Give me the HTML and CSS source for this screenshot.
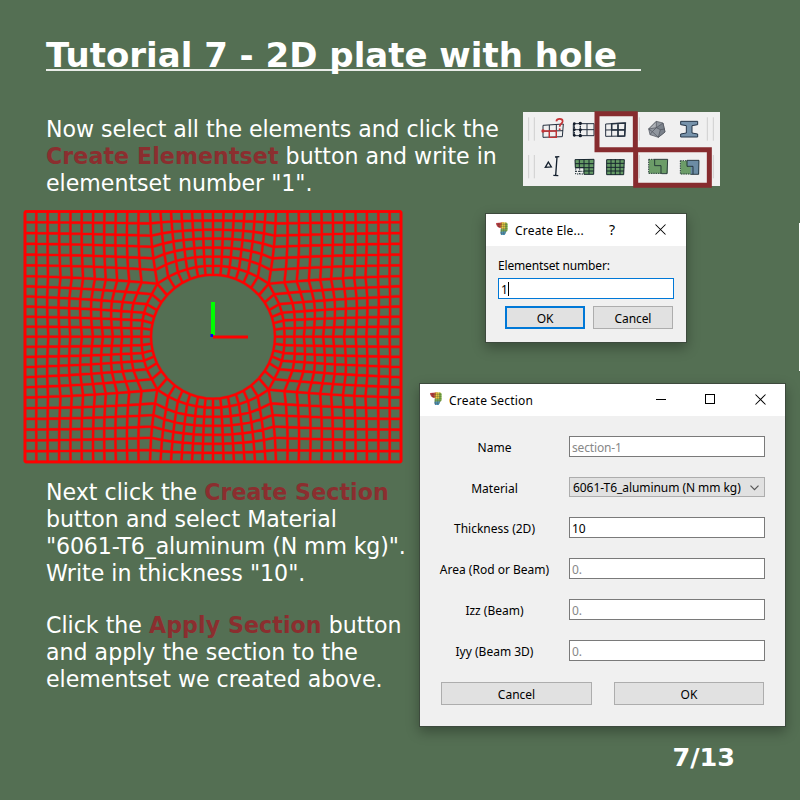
FILE: index.html
```html
<!DOCTYPE html>
<html lang="en">
<head>
<meta charset="utf-8">
<title>Tutorial 7 - 2D plate with hole</title>
<link rel="stylesheet" href="styles.css">
</head>
<body>
<svg width="0" height="0" class="defs">
  <symbol id="logo" viewBox="0 0 14 15">
    <path d="M0 1 7 .5 7 5.500 4 6.500 1 4.500Z" fill="#c03c42"/>
    <path d="M5 .8 8 .3 8 5.500 4.500 6.500Z" fill="#d9822b"/>
    <path d="M7 .3 11.500.5 12 8 5.500 8 6 4.500Z" fill="#e6d044"/>
    <path d="M10 .5 12.500 1.500 12.500 9 10 11Z" fill="#7fb848"/>
    <path d="M5 7.500 11.500 7.500 10.500 12 5 11Z" fill="#7fbe60"/>
    <path d="M4.500 10.500 11 10 9.500 14 5.500 14Z" fill="#4f9cc4"/>
    <path d="M0 2.500H12.500M2 4.700H12.500M5 7.200H12.500M5 9.500H12M4.500 12H10.500M3 1V6M5.700.8V14M8.300.5V14M10.600.5V11" fill="none" stroke="#4a3a30" stroke-width=".35"/>
  </symbol>
  <symbol id="cross" viewBox="0 0 11 11">
    <path d="M.5.500 10.500 10.500M10.500.500.5 10.500" fill="none" stroke="#000" stroke-width="1.050"/>
  </symbol>
</svg>
<main class="slide">
  <h1 class="title">Tutorial 7 - 2D plate with hole</h1>
  <section class="intro">
    <p class="copy"><span class="snug">Now select all the elements and click the</span><br><b>Create Elementset</b> button and write in<br>elementset number "1".</p>
    <svg class="toolbar" viewBox="24 21 591 222">
      <rect x="24" y="21" width="591" height="222" fill="#f0f0f0"/>
      <path d="M41 37V107M58 37V107M373 37V107M577 37V107M595 37V107M41 150V220M58 150V220M373 150V220M595 150V220" stroke="#cfcfcf" stroke-width="3"/>
      <g fill="none" stroke="#25303f" stroke-width="3">
        <path d="M84 61 145 57 142 95 84 97ZM103 60V97M124 59V96M84 79 144 77"/>
        <path d="M84 78H103V97H124V78H103" stroke="#c53335" stroke-width="4"/>
        <path d="M124 49C125 39 143 39 143 49 143 56 134 56 134 65" stroke="#c53335" stroke-width="5"/>
        <g fill="#c53335" stroke="none"><circle cx="84" cy="78" r="5"/><circle cx="134" cy="73" r="3"/></g>
        <path d="M175 56H237V92H175ZM175 74H237M216 56V92"/>
        <path d="M178 56V92M196 54V94" stroke-width="4" stroke-dasharray="6 2"/>
        <g fill="#111a28" stroke="none"><circle cx="178" cy="56" r="4"/><circle cx="196" cy="55" r="5"/><circle cx="178" cy="74" r="4"/><circle cx="196" cy="74" r="4.500"/><circle cx="178" cy="91" r="4"/><circle cx="196" cy="92" r="5"/></g>
        <path d="M272 57 331 54 329 93 272 94ZM272 75 330 74M290 56V94M309 55V93"/>
        <path d="M290 56 331 54 329 93 309 94V75H290ZM309 55V75H330" stroke-width="4.500"/>
      </g>
      <g stroke="#4d525a" stroke-width="2" stroke-linejoin="round">
        <path d="M401 72 424 49 444 54 450 81 430 97 405 89Z" fill="#90969e"/>
        <path d="M401 72 424 68 424 49Z" fill="#aeb2b7"/>
        <path d="M424 68 444 54 450 81 430 97 436 74Z" fill="#7b828b"/>
        <path d="M424 68 412 80 405 89M412 80 430 97M412 80 401 72M436 74 450 72" fill="none"/>
      </g>
      <path d="M497 49H548V59L531 62V84L548 87V96H497V87L514 84V62L497 59Z" fill="#7793ab" stroke="#273749" stroke-width="3"/>
      <g fill="none" stroke="#14202e" stroke-width="4">
        <path d="M100 171 91 187 109 186ZM120 156 133 155M126 156 122 212M115 211 130 212"/>
      </g>
      <path d="M180 164 237 163 236 208 206 207V188H180Z" fill="#659a65"/>
      <path d="M275 164 328 164 326 209 275 209Z" fill="#659a65"/>
      <g fill="none" stroke="#17262e" stroke-width="3">
        <path d="M180 164 237 163 236 208H207V188H181ZM180 176H237M181 188H237M207 198H236M193 164V188M207 164V188M222 164V208"/>
        <path d="M182 190V207H206M182 199H206M194 190V207" stroke-dasharray="4 3"/>
        <path d="M275 164 328 164 326 209 275 209ZM275 175H328M274 187H328M275 198H327M288 162V210M301 162V210M315 162V210"/>
      </g>
      <path d="M401 163H458V206H401Z" fill="#6c9c68"/>
      <path d="M496 167H519V184H529V208H496Z" fill="#6c9c68"/>
      <path d="M517 166H552V208H527V184H517Z" fill="#6c8ca5"/>
      <g fill="none" stroke="#17262e" stroke-width="2.500">
        <path d="M419 163 458 163 456 206 440 206M419 163V182H438V206"/>
        <path d="M401 163H419M401 163V205H440" stroke-dasharray="4 3"/>
        <path d="M516 166 552 166 551 208 526 208M516 166V184H534V208"/>
        <path d="M496 167H516M496 167V207H526" stroke-dasharray="4 3"/>
      </g>
      <path d="M246 26.500H361V134.500H246ZM362 134H583V241H362Z" fill="none" stroke="#872c2f" stroke-width="15"/>
    </svg>
  </section>
  <section class="work">
    <div class="left">
      <svg class="plate" viewBox="23 209 382 256" id="plate">
        <path id="halo" class="halo"/>
        <path id="mesh" class="mesh"/>
        <rect x="25" y="211.500" width="376" height="250.500" rx="1" class="edge"/>
        <path d="M213 337H248" stroke="#f00" stroke-width="3"/>
        <path d="M213 335V302" stroke="#0f0" stroke-width="4"/>
        <path d="M210.500 335.500H213" stroke="#00f" stroke-width="3"/>
      </svg>
      <p class="copy next">Next click the <b>Create Section</b><br>button and select Material<br><span class="tight">"6061-T6_aluminum (N mm kg)".</span><br>Write in thickness "10".</p>
      <p class="copy apply">Click the <b>Apply Section</b> button<br>and apply the section to the<br>elementset we created above.</p>
    </div>
    <div class="right">
      <div class="dialog small">
        <div class="bar"><svg class="logo"><use href="#logo"/></svg><span class="caption">Create Ele...</span><span class="help">?</span><svg class="cross"><use href="#cross"/></svg></div>
        <div class="body">
          <div class="prompt">Elementset number:</div>
          <div class="field focus">1<i class="caret"></i></div>
          <div class="buttons"><div class="button default">OK</div><div class="button">Cancel</div></div>
        </div>
      </div>
      <div class="dialog large">
        <div class="bar"><svg class="logo"><use href="#logo"/></svg><span class="caption">Create Section</span><i class="min"></i><i class="max"></i><svg class="cross"><use href="#cross"/></svg></div>
        <div class="form">
          <span class="label">Name</span><div class="field dim">section-1</div>
          <span class="label">Material</span><div class="field combo">6061-T6_aluminum (N mm kg)<svg class="chevron" viewBox="0 0 9 6"><path d="M.5.700 4.500 4.700 8.500.700" fill="none" stroke="#555" stroke-width="1.200"/></svg></div>
          <span class="label">Thickness (2D)</span><div class="field">10</div>
          <span class="label">Area (Rod or Beam)</span><div class="field dim">0.</div>
          <span class="label">Izz (Beam)</span><div class="field dim">0.</div>
          <span class="label">Iyy (Beam 3D)</span><div class="field dim">0.</div>
        </div>
        <div class="buttons wide"><div class="button">Cancel</div><div class="button">OK</div></div>
      </div>
    </div>
  </section>
  <footer class="page">7/13</footer>
  <i class="sliver"></i>
</main>
<script src="mesh.js"></script>
</body>
</html>
```
FILE: styles.css
```css
* { box-sizing: border-box; }
body { margin: 0; }
.defs { position: absolute; }
.slide {
  position: relative;
  width: 800px;
  height: 800px;
  overflow: hidden;
  background: #546f53;
  color: #fff;
  font-family: "DejaVu Sans", sans-serif;
}
.title {
  width: 595px;
  height: 36px;
  margin: 35px 0 0 46px;
  border-bottom: 2px solid #e9ede9;
  font-size: 34px;
  line-height: 40px;
  white-space: nowrap;
}
.intro { display: flex; height: 98px; margin-top: 41px; padding-left: 46px; }
.copy { margin: 0; padding-top: 4px; font-size: 22.1px; line-height: 27px; white-space: nowrap; }
.copy b { color: #8b2e2f; letter-spacing: .1px; }
.snug { letter-spacing: -.05px; }
.tight { letter-spacing: -.14px; }
.intro .copy { width: 477px; }
.toolbar { width: 197px; height: 74px; overflow: visible; }
.work { display: flex; height: 530px; margin-top: -1px; }
.left { width: 419px; }
.plate { display: block; width: 382px; height: 256px; margin-left: 23px; }
.mesh { fill: none; stroke: #f00; stroke-width: 2.1; stroke-linejoin: round; }
.halo { fill: none; stroke: #f00; stroke-width: 3.2; stroke-opacity: .4; }
.edge { fill: none; stroke: #f00; stroke-width: 2.6; }
.next, .apply { margin-left: 46px; }
.next { padding-top: 14px; }
.apply { padding-top: 25px; }
.right { width: 368px; padding-top: 4px; font-family: "Noto Sans", sans-serif; font-size: 12px; color: #000; }
.dialog { border: 1px solid #3d4a3d; background: #f0f0f0; box-shadow: 0 5px 12px rgba(0, 0, 0, .3); }
.small { width: 202px; height: 130px; margin-left: 66px; }
.large { width: 367px; height: 344px; margin-top: 40px; }
.bar { display: flex; height: 32px; padding-left: 10px; background: #fff; line-height: 34px; }
.logo { width: 13px; height: 14px; margin: 8px 1px 0 0; }
.caption { margin-left: 5px; letter-spacing: .2px; white-space: nowrap; }
.small .caption { width: 94px; }
.large .caption { width: 207px; }
.help { width: 46px; font-size: 14px; line-height: 31px; }
.cross { width: 11px; height: 11px; margin-top: 10px; }
.min { width: 10px; height: 1px; margin: 15px 39px 0 0; background: #000; }
.max { width: 10px; height: 10px; margin: 10px 40px 0 0; border: 1px solid #000; }
.body { padding: 9px 12px 0; }
.prompt { height: 23px; line-height: 22px; letter-spacing: -.16px; }
.field { display: flex; position: relative; height: 21px; padding-left: 2px; border: 1px solid #7a7a7a; background: #fff; line-height: 21px; white-space: nowrap; }
.focus { border-color: #0078d7; }
.caret { width: 1px; height: 14px; margin-top: 3px; background: #000; }
.dim { color: #888; letter-spacing: -.15px; }
.combo { height: 20px; padding-left: 3px; border-color: #adadad; background: #e1e1e1; letter-spacing: -.06px; line-height: 20px; }
.chevron { width: 9px; height: 6px; margin: 7px 5px 0 auto; }
.buttons { display: flex; gap: 8px; margin: 7px 0 0 7px; }
.button { width: 80px; height: 23px; border: 1px solid #adadad; background: #e1e1e1; line-height: 24px; text-align: center; }
.default { border: 2px solid #0078d7; line-height: 22px; }
.small .button { letter-spacing: -.1px; }
.form { display: grid; grid-template-columns: 149px 196px; grid-template-rows: 41px 40px 41px 41px 41px 41px; padding-top: 20px; }
.label { line-height: 23px; text-align: center; white-space: nowrap; }
.wide { gap: 22px; margin: 1px 0 0 21px; }
.wide .button { width: 151px; }
.wide .button + .button { width: 150px; }
.page { position: absolute; right: 65px; bottom: 28px; font-size: 25.500px; line-height: 30px; font-weight: bold; }
.sliver { position: absolute; right: 0; top: 223px; width: 1px; height: 148px; background: #fff; }
```
FILE: mesh.js
```js
// Structured quad mesh of one quarter of the plate, mirrored about both axes.
const CX = 213, CY = 336.7, L = 25, T = 211.5, R = 62;
const corner = [157.3, 283.7];
const mix = (a, b, t) => [a[0] + (b[0] - a[0]) * t, a[1] + (b[1] - a[1]) * t];
const polar = (deg, r) => [CX - r * Math.cos(deg * Math.PI / 180), CY - r * Math.sin(deg * Math.PI / 180)];
const topLeft = [L, T], topKnee = [150, T], leftKnee = [L, 276];

// Piecewise-linear lookup: node n of the table sits at t = n / (length - 1).
const table = values => t => {
  const x = t * (values.length - 1), i = Math.min(values.length - 2, Math.floor(x + 1e-9));
  return values[i] + (values[i + 1] - values[i]) * (x - i);
};
const downSpacing = table([0, .165, .335, .49, .65, .81, 1]);
const acrossSpacing = table([0, .086, .174, .268, .354, .439, .528, .611, .697, .788, .881, 1]);
const middleSpacing = table([0, .097, .2, .297, .389, .489, .583, .669, .754, .834, .917, 1]);
const sideAngle = table([43.6, 34.8, 26.2, 19.2, 13, 6.7, 0]);
const sideRadius = table([76.9, 74.5, 73.8, 73, 72.4, 71.8, 71.5]);
const topAngle = table([43.6, 53.2, 61.4, 69, 76.5, 83.3, 90]);
const topRadius = table([76.9, 74.7, 73.4, 72.3, 71.6, 71.2, 71]);

const kneeDown = s => { const t = downSpacing(s), p = mix(topKnee, corner, t); return [p[0] - 1.5 * Math.sin(Math.PI * t), p[1]]; };
const kneeAcross = s => { const t = acrossSpacing(s), p = mix(leftKnee, corner, t); return [p[0], p[1] - 1.2 * Math.sin(Math.PI * t)]; };
const topRing = t => polar(topAngle(t), topRadius(t));
const sideRing = t => polar(sideAngle(t), sideRadius(t));
const topHole = t => polar(90 - (90 - topAngle(t)) * 1.03, R);
const sideHole = t => polar(sideAngle(t) * .965, R);

function coons(top, bottom, left, right, nu, nv) {
  const a = top(0), b = top(1), c = bottom(0), d = bottom(1), g = [];
  for (let j = 0; j <= nv; j++) {
    g.push([]);
    for (let i = 0; i <= nu; i++) {
      const u = i / nu, v = j / nv;
      g[j].push([0, 1].map(k =>
        (1 - v) * top(u)[k] + v * bottom(u)[k] + (1 - u) * left(v)[k] + u * right(v)[k]
        - ((1 - u) * (1 - v) * a[k] + u * (1 - v) * b[k] + (1 - u) * v * c[k] + u * v * d[k])));
    }
  }
  return g;
}

const segment = (a, b) => t => mix(a, b, t);
const middle = t => mix([L, CY], sideRing(1), middleSpacing(t));
const blocks = [
  coons(segment(topLeft, topKnee), kneeAcross, segment(topLeft, leftKnee), kneeDown, 11, 6),
  coons(segment(topKnee, [CX, T]), topRing, kneeDown, segment([CX, T], topRing(1)), 6, 6),
  coons(kneeAcross, middle, segment(leftKnee, [L, CY]), sideRing, 11, 6),
  coons(topRing, topHole, segment(corner, topHole(0)), segment(topRing(1), topHole(1)), 6, 1),
  coons(sideRing, sideHole, segment(corner, sideHole(0)), segment(sideRing(1), sideHole(1)), 6, 1)
];

let d = "";
for (const [sx, sy] of [[1, 1], [-1, 1], [1, -1], [-1, -1]]) {
  const place = p => (CX + sx * (p[0] - CX)).toFixed(1) + " " + (CY + sy * (p[1] - CY)).toFixed(1);
  for (const g of blocks) {
    for (const row of g) d += "M" + row.map(place).join("L");
    for (let i = 0; i < g[0].length; i++) d += "M" + g.map(row => place(row[i])).join("L");
  }
}
document.getElementById("mesh").setAttribute("d", d);
document.getElementById("halo").setAttribute("d", d);
```
